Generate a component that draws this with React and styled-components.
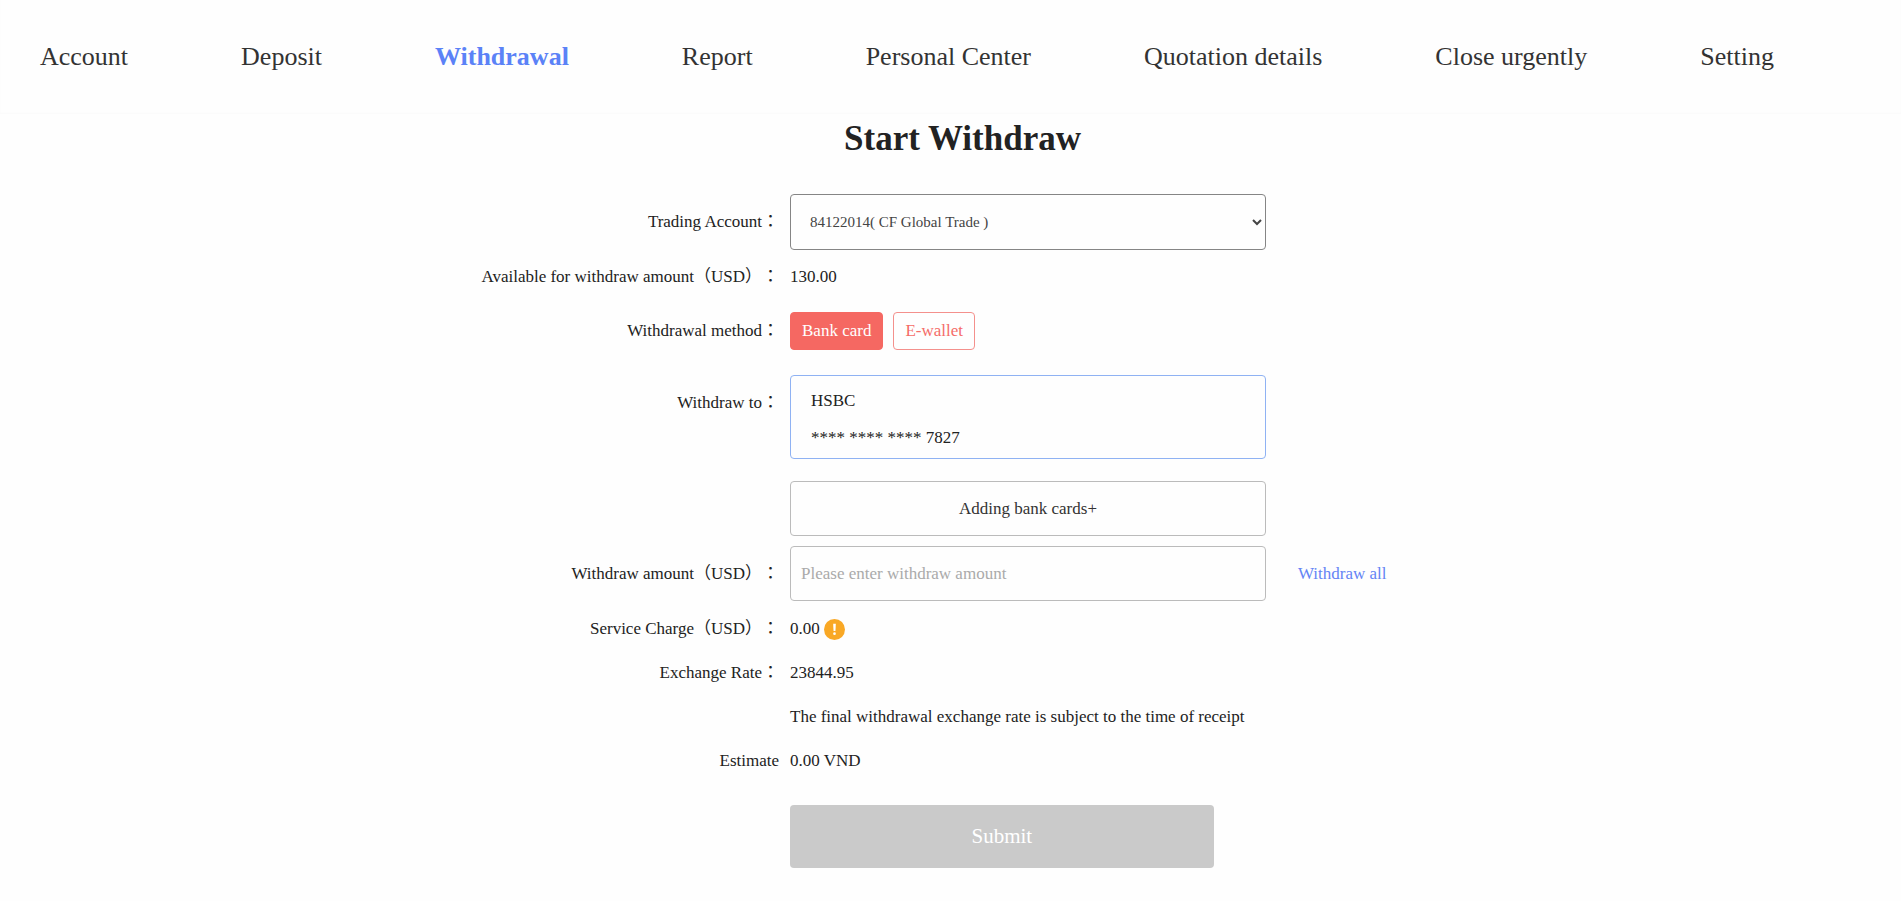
import { useState } from 'react';
import styled, { createGlobalStyle, css } from 'styled-components';


const navItems = [
    'Account',
    'Deposit',
    'Withdrawal',
    'Report',
    'Personal Center',
    'Quotation details',
    'Close urgently',
    'Setting'
];

const methods = ['Bank card', 'E-wallet'];


const App = () => {
    const [method, setMethod] = useState('Bank card');
    const [amount, setAmount] = useState('');

    return (
        <>
            <GlobalStyle />
            <Nav>
                {navItems.map(item => (
                    <NavLink key={item} href="#" $active={item === 'Withdrawal'}>{item}</NavLink>
                ))}
            </Nav>

            <Main>
                <Title>Start Withdraw</Title>

                <Form onSubmit={e => e.preventDefault()}>
                    <Row>
                        <Label as="label" htmlFor="account">Trading Account：</Label>
                        <Select id="account">
                            <option>84122014( CF Global Trade )</option>
                        </Select>
                    </Row>

                    <Row $height={54}>
                        <Label>Available for withdraw amount（USD）：</Label>
                        <Value>130.00</Value>
                    </Row>

                    <Row $height={54}>
                        <Label id="method">Withdrawal method：</Label>
                        <Methods role="group" aria-labelledby="method">
                            {methods.map(name => (
                                <MethodButton key={name}
                                              type="button"
                                              $active={name === method}
                                              aria-pressed={name === method}
                                              onClick={() => setMethod(name)}
                                >
                                    {name}
                                </MethodButton>
                            ))}
                        </Methods>
                    </Row>

                    <Row $top={17} $align="start">
                        <CardLabel id="card">Withdraw to：</CardLabel>
                        <Card type="button" aria-describedby="card">
                            <CardLine>HSBC</CardLine>
                            <CardLine>**** **** **** 7827</CardLine>
                        </Card>
                    </Row>

                    <Row $top={22}>
                        <AddCard type="button">Adding bank cards+</AddCard>
                    </Row>

                    <Row $top={10}>
                        <Label as="label" htmlFor="amount">Withdraw amount（USD）：</Label>
                        <Input id="amount"
                               placeholder="Please enter withdraw amount"
                               value={amount}
                               onChange={e => setAmount(e.target.value)}
                        />
                        <AllButton type="button" onClick={() => setAmount('130.00')}>Withdraw all</AllButton>
                    </Row>

                    <Row $top={6} $height={44}>
                        <Label>Service Charge（USD）：</Label>
                        <Value>
                            0.00
                            <NoticeIcon viewBox="0 0 22 22" aria-hidden="true">
                                <circle cx="11" cy="11" r="11" fill="#f9a825" />
                                <path d="M9.6 5h2.8l-.4 7.6h-2z" fill="#fff" />
                                <circle cx="11" cy="15.4" r="1.4" fill="#fff" />
                            </NoticeIcon>
                        </Value>
                    </Row>

                    <Row $height={44}>
                        <Label>Exchange Rate：</Label>
                        <Value>23844.95</Value>
                    </Row>

                    <Row $height={44}>
                        <Value>The final withdrawal exchange rate is subject to the time of receipt</Value>
                    </Row>

                    <Row $height={44}>
                        <Label>Estimate</Label>
                        <Value>0.00 VND</Value>
                    </Row>

                    <Row $top={22}>
                        <Submit type="submit">Submit</Submit>
                    </Row>
                </Form>
            </Main>
        </>
    );
}


export default App;


const GlobalStyle = createGlobalStyle`
    * {
        box-sizing: border-box;
    }

    body {
        margin: 0;
        background-color: #fefefe;
        color: #222;
        font-family: "Liberation Serif", "Noto Sans CJK TC", serif;
        font-size: 17px;
    }

    button, input, select {
        font-family: inherit;
        font-size: inherit;
        color: inherit;
    }
`;

const Nav = styled.nav`
    display: flex;
    align-items: center;
    gap: 113px;
    height: 114px;
    padding: 0 40px;
    box-shadow: inset 0 -1px 2px #fafafa;
`;

const NavLink = styled.a`
    color: #333;
    font-size: 26px;
    text-decoration: none;
    white-space: nowrap;

    ${props => props.$active && css`
        color: #5b82f7;
        font-weight: bold;
    `}
`;

const Main = styled.main`
    padding: 5px 0 33px 24px;
`;

const Title = styled.h1`
    margin: 0 0 35px;
    font-size: 35px;
    line-height: 40px;
    text-align: center;
`;

const Form = styled.form`
    display: flex;
    flex-direction: column;
`;

const Row = styled.div`
    display: grid;
    grid-template-columns: 755fr 476fr 624fr;
    column-gap: 11px;
    align-items: ${props => props.$align || 'center'};
    min-height: ${props => props.$height || 0}px;
    margin-top: ${props => props.$top || 0}px;
`;

/* full-width brackets and colon keep their full advance */
const Label = styled.div`
    grid-column: 1;
    text-align: right;
    line-height: 20px;
    text-spacing-trim: space-all;
`;

const CardLabel = styled(Label)`
    padding-top: 18px;
`;

const Value = styled.div`
    grid-column: 2;
    display: flex;
    align-items: center;
    gap: 4px;
    white-space: nowrap;
`;

const field = css`
    grid-column: 2;
    width: 100%;
    height: 55px;
    border: 1px solid #bbb;
    border-radius: 4px;
    background-color: #fefefe;
`;

const Select = styled.select`
    ${field}
    height: 56px;
    padding: 0 0 0 15px;
    border-color: #858585;
    color: #444;
    font-size: 15px;
`;

const Input = styled.input`
    ${field}
    padding: 0 10px;

    &::placeholder {
        color: #aaa;
    }
`;

const AddCard = styled.button`
    ${field}
    color: #333;
`;

const Card = styled.button`
    ${field}
    height: auto;
    padding: 6px 20px 2px;
    border-color: #8fb2f3;
    text-align: left;
`;

const CardLine = styled.span`
    display: block;
    line-height: 37px;
`;

const Methods = styled.div`
    grid-column: 2;
    display: flex;
    gap: 10px;
`;

const MethodButton = styled.button`
    height: 38px;
    padding: 0 11px;
    border: 1px solid #f4908c;
    border-radius: 4px;
    background-color: #fefefe;
    color: #f56c68;

    ${props => props.$active && css`
        border-color: #f56862;
        background-color: #f56862;
        color: white;
    `}
`;

const AllButton = styled.button`
    grid-column: 3;
    justify-self: start;
    margin-left: 21px;
    padding: 0;
    border: none;
    background: none;
    color: #6484f5;
`;

const NoticeIcon = styled.svg`
    width: 21px;
    height: 21px;
`;

const Submit = styled.button`
    grid-column: 2;
    width: 89%;
    height: 63px;
    border: none;
    border-radius: 4px;
    background-color: #cacaca;
    color: white;
    font-size: 21px;
`;
